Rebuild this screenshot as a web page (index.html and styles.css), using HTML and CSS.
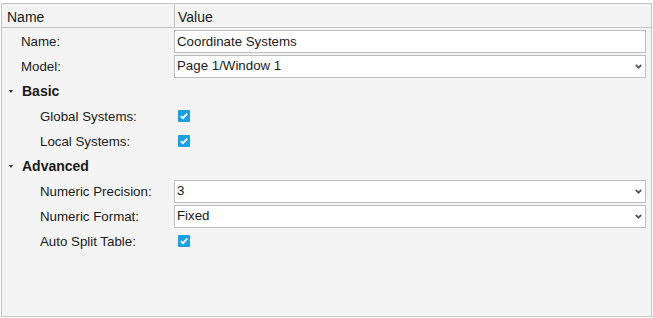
FILE: index.html
```html
<!DOCTYPE html>
<html>
  <head>
    <meta charset="UTF-8" />
    <title>Coordinate Systems</title>
    <link rel="stylesheet" href="styles.css">
  </head>
  <body>
    <div class="panel">
      <div class="head">
        <div class="head-cell">Name</div>
        <div class="head-cell head-value">Value</div>
      </div>

      <div class="row">
        <div class="label">Name:</div>
        <div class="cell"><div class="field">Coordinate Systems</div></div>
      </div>
      <div class="row">
        <div class="label">Model:</div>
        <div class="cell">
          <div class="field select">
            <span>Page 1/Window 1</span>
            <svg class="arrow" width="7" height="5" viewBox="0 0 7 5"><polyline points="0.8,1 3.5,3.7 6.2,1" fill="none" stroke="#5a5a5a" stroke-width="1.8"/></svg>
          </div>
        </div>
      </div>

      <!-- Basic -->
      <div class="section"><span class="caret"></span>Basic</div>
      <div class="row">
        <div class="label sub">Global Systems:</div>
        <div class="cell">
          <span class="check"><svg width="12" height="12" viewBox="0 0 12 12"><polyline points="2.8,6.2 5,8.2 9.2,3.6" fill="none" stroke="#fff" stroke-width="1.8"/></svg></span>
        </div>
      </div>
      <div class="row">
        <div class="label sub">Local Systems:</div>
        <div class="cell">
          <span class="check"><svg width="12" height="12" viewBox="0 0 12 12"><polyline points="2.8,6.2 5,8.2 9.2,3.6" fill="none" stroke="#fff" stroke-width="1.8"/></svg></span>
        </div>
      </div>

      <!-- Advanced -->
      <div class="section"><span class="caret"></span>Advanced</div>
      <div class="row">
        <div class="label sub">Numeric Precision:</div>
        <div class="cell">
          <div class="field select">
            <span>3</span>
            <svg class="arrow" width="7" height="5" viewBox="0 0 7 5"><polyline points="0.8,1 3.5,3.7 6.2,1" fill="none" stroke="#5a5a5a" stroke-width="1.8"/></svg>
          </div>
        </div>
      </div>
      <div class="row">
        <div class="label sub">Numeric Format:</div>
        <div class="cell">
          <div class="field select">
            <span>Fixed</span>
            <svg class="arrow" width="7" height="5" viewBox="0 0 7 5"><polyline points="0.8,1 3.5,3.7 6.2,1" fill="none" stroke="#5a5a5a" stroke-width="1.8"/></svg>
          </div>
        </div>
      </div>
      <div class="row">
        <div class="label sub">Auto Split Table:</div>
        <div class="cell">
          <span class="check"><svg width="12" height="12" viewBox="0 0 12 12"><polyline points="2.8,6.2 5,8.2 9.2,3.6" fill="none" stroke="#fff" stroke-width="1.8"/></svg></span>
        </div>
      </div>
    </div>
  </body>
</html>
```

FILE: styles.css
```css
body {
  margin: 0;
  background: #ffffff;
  font-family: "Liberation Sans", Arial, sans-serif;
  color: #1a1a1a;
}

.panel {
  margin: 3px 0 0 1px;
  width: 651px;
  height: 314px;
  box-sizing: border-box;
  border: 1px solid #c4c4c4;
  background: #f4f4f4;
}

.head {
  display: grid;
  grid-template-columns: 172px 1fr;
  height: 24px;
  box-sizing: border-box;
  border-bottom: 1px solid #c4c4c4;
  background: #f3f3f3;
  font-size: 14px;
}

.head-cell {
  padding: 4px 0 0 5px;
  line-height: 18px;
}

.head-value {
  border-left: 1px solid #c4c4c4;
  padding-left: 3px;
}

.row {
  display: grid;
  grid-template-columns: 172px 1fr;
  height: 25px;
  align-items: center;
  font-size: 13.3px;
}

.label {
  padding: 2px 0 0 19px;
}

.label.sub {
  padding-left: 38px;
}

.cell {
  display: flex;
  align-items: center;
  padding-top: 1px;
}

.field {
  width: 472px;
  height: 23px;
  box-sizing: border-box;
  border: 1px solid #bdbdbd;
  background: #ffffff;
  padding-left: 2px;
  line-height: 22px;
}

.select {
  display: flex;
  justify-content: space-between;
  align-items: center;
}

.arrow {
  margin-right: 3px;
}

.check {
  display: block;
  width: 12px;
  height: 12px;
  margin-left: 4px;
  background: #1ba1e2;
  border-radius: 1px;
}

.check svg {
  display: block;
}

.section {
  display: flex;
  align-items: center;
  height: 25px;
  padding-top: 1px;
  box-sizing: border-box;
  font-size: 14px;
  font-weight: bold;
}

.caret {
  width: 0;
  height: 0;
  margin: 0 9px 0 7px;
  border-left: 2.5px solid transparent;
  border-right: 2.5px solid transparent;
  border-top: 3px solid #333;
}
```
